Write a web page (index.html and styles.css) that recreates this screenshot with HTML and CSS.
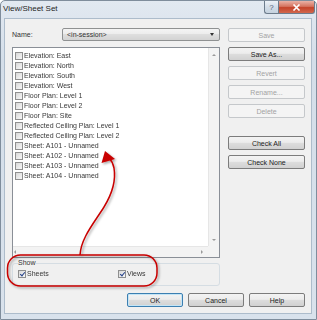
FILE: index.html
```html
<!DOCTYPE html>
<html lang="en">
<head>
    <meta charset="UTF-8">
    <title>View/Sheet Set</title>
    <link rel="stylesheet" href="styles.css">
</head>
<body>
<div class="stage">

    <!-- Dialog window -->
    <div class="window">
        <div class="titlebar">
            <span class="title">View/Sheet Set</span>
            <div class="caption-btns">
                <span class="cap-help">?</span>
                <span class="cap-close">
                    <svg width="9" height="7" viewBox="0 0 9 7"><path d="M1.5 0.5 L7.5 6.5 M7.5 0.5 L1.5 6.5" stroke="#fff" stroke-width="1.6"/></svg>
                </span>
            </div>
        </div>

        <div class="client">
            <div class="main">
                <div class="left">
                    <div class="name-row">
                        <span class="name-label">Name:</span>
                        <div class="combo">&lt;in-session&gt;<span class="combo-arrow"></span></div>
                    </div>

                    <!-- View list -->
                    <div class="listbox">
                        <div class="items">
                            <div class="item">Elevation: East</div>
                            <div class="item">Elevation: North</div>
                            <div class="item">Elevation: South</div>
                            <div class="item">Elevation: West</div>
                            <div class="item">Floor Plan: Level 1</div>
                            <div class="item">Floor Plan: Level 2</div>
                            <div class="item">Floor Plan: Site</div>
                            <div class="item">Reflected Ceiling Plan: Level 1</div>
                            <div class="item">Reflected Ceiling Plan: Level 2</div>
                            <div class="item">Sheet: A101 - Unnamed</div>
                            <div class="item">Sheet: A102 - Unnamed</div>
                            <div class="item">Sheet: A103 - Unnamed</div>
                            <div class="item">Sheet: A104 - Unnamed</div>
                        </div>
                        <div class="vscroll"><span class="arr-up"></span><span class="arr-down"></span></div>
                        <div class="hscroll"><span class="arr-left"></span><span class="arr-right"></span></div>
                        <div class="corner"></div>
                    </div>

                    <!-- Show group -->
                    <div class="show">
                        <div class="show-legend">Show</div>
                        <div class="show-row">
                            <div class="item checked opt-sheets"><span class="opt-text">Sheets</span></div>
                            <div class="item checked"><span class="opt-text">Views</span></div>
                        </div>
                    </div>
                </div>

                <!-- Side buttons -->
                <div class="right">
                    <div class="btn disabled">Save</div>
                    <div class="btn">Save As...</div>
                    <div class="btn disabled">Revert</div>
                    <div class="btn disabled">Rename...</div>
                    <div class="btn disabled">Delete</div>
                    <div class="btn gap">Check All</div>
                    <div class="btn">Check None</div>
                </div>
            </div>

            <div class="footer">
                <div class="btn default">OK</div>
                <div class="btn">Cancel</div>
                <div class="btn">Help</div>
            </div>
        </div>
    </div>

    <!-- Red annotation -->
    <svg class="annotation" width="317" height="320" viewBox="0 0 317 320">
        <defs>
            <filter id="shadow" x="-20%" y="-20%" width="140%" height="140%">
                <feDropShadow dx="1.5" dy="1.5" stdDeviation="1.2" flood-color="#000" flood-opacity="0.35"/>
            </filter>
        </defs>
        <g filter="url(#shadow)" fill="none" stroke="#c80000" stroke-width="1.5">
            <rect x="7.5" y="255" width="149.5" height="31" rx="13"/>
            <path d="M80 255 C81 238, 94 223, 104 207 C112 194, 116 180, 114 168 C113 163, 111 160, 109 158"/>
            <polygon points="105,151 101.5,163 115,159" fill="#c80000" stroke="none"/>
        </g>
    </svg>

</div>
</body>
</html>
```

FILE: styles.css
```css
/* General */
*,
*::before,
*::after {
    box-sizing: border-box;
}

body {
    margin: 0;
    background: #fff;
    font-family: "Liberation Sans", Arial, sans-serif;
    font-size: 7px;
    color: #333;
}

.stage {
    position: relative;
    width: 317px;
    height: 320px;
}

/* Window frame */
.window {
    width: 317px;
    height: 320px;
    border: 1px solid #7f8d9c;
    border-radius: 5px 5px 0 0;
    background: linear-gradient(#e2e9f1, #d4dee9 60px, #d9e2ec);
    display: flex;
    flex-direction: column;
    padding: 0 4px 5px 3px;
}

.titlebar {
    height: 17px;
    display: flex;
    justify-content: space-between;
    align-items: flex-start;
}

.title {
    font-size: 8px;
    line-height: 16px;
    color: #1e1e1e;
    margin-left: -1px;
}

.caption-btns {
    display: flex;
    margin-right: -3px;
}

.cap-help,
.cap-close {
    height: 13px;
    border: 1px solid #6d7c8c;
    border-top: none;
    display: flex;
    align-items: center;
    justify-content: center;
}

.cap-help {
    width: 14px;
    border-right: none;
    border-radius: 0 0 0 3px;
    background: linear-gradient(#edf2f7, #d3dde8 50%, #c5d2df);
    color: #56657a;
    font-size: 8px;
}

.cap-close {
    width: 37px;
    border-radius: 0 0 3px 0;
    background: linear-gradient(#eab2a6, #d57460 45%, #c4432a 55%, #d2684e);
}

/* Client area */
.client {
    flex: 1;
    background: #f0f0f0;
    border: 1px solid #adbccb;
    padding: 9px 6px 6px 7px;
    display: flex;
    flex-direction: column;
}

.main {
    display: flex;
    gap: 8px;
}

.left {
    width: 208px;
    display: flex;
    flex-direction: column;
}

.name-row {
    display: flex;
    align-items: center;
    height: 13px;
}

.name-label {
    width: 50px;
}

.combo {
    position: relative;
    width: 158px;
    height: 13px;
    border: 1px solid #8f9192;
    border-radius: 2px;
    background: linear-gradient(#f4f4f4, #ececec 45%, #dedede 50%, #d3d3d3);
    padding-left: 4px;
    line-height: 11px;
}

.combo-arrow {
    position: absolute;
    right: 5px;
    top: 4px;
    border-left: 2.5px solid transparent;
    border-right: 2.5px solid transparent;
    border-top: 3px solid #333;
}

/* List box */
.listbox {
    margin-top: 6px;
    height: 211px;
    border: 1px solid #8a8f97;
    background: #fff;
    display: grid;
    grid-template-columns: 1fr 11px;
    grid-template-rows: 1fr 11px;
}

/* grayscale keeps the tiny text free of colour fringes */
.items {
    padding: 3px 0 0 2px;
    filter: grayscale(1);
}

.opt-text {
    display: inline-block;
    filter: grayscale(1);
}

/* checkbox row: box drawn by ::before */
.item {
    position: relative;
    height: 10px;
    line-height: 10px;
    padding-left: 9px;
    white-space: nowrap;
    color: #383838;
}

.item::before {
    content: "";
    position: absolute;
    left: 0;
    top: 1px;
    width: 8px;
    height: 8px;
    border: 1px solid #8e8f8f;
    background: linear-gradient(135deg, #d8d8d8, #f7f7f7);
}

.item.checked::after {
    content: "";
    position: absolute;
    left: 2.5px;
    top: 1.5px;
    width: 3px;
    height: 5px;
    border-right: 1.3px solid #23408a;
    border-bottom: 1.3px solid #23408a;
    transform: rotate(40deg);
}

.vscroll,
.hscroll,
.corner {
    background: #f3f3f3;
    position: relative;
}

.vscroll {
    border-left: 1px solid #e6e6e6;
}

.hscroll {
    border-top: 1px solid #e6e6e6;
}

.arr-up,
.arr-down,
.arr-left,
.arr-right {
    position: absolute;
    width: 0;
    height: 0;
}

.arr-up {
    top: 6px;
    left: 3px;
    border-left: 2.5px solid transparent;
    border-right: 2.5px solid transparent;
    border-bottom: 2.5px solid #9a9a9a;
}

.arr-down {
    bottom: 5px;
    left: 3px;
    border-left: 2.5px solid transparent;
    border-right: 2.5px solid transparent;
    border-top: 2.5px solid #9a9a9a;
}

.arr-left {
    left: 1px;
    top: 3px;
    border-top: 2.5px solid transparent;
    border-bottom: 2.5px solid transparent;
    border-right: 2.5px solid #9a9a9a;
}

.arr-right {
    right: 5px;
    top: 3px;
    border-top: 2.5px solid transparent;
    border-bottom: 2.5px solid transparent;
    border-left: 2.5px solid #9a9a9a;
}

/* Show group */
.show {
    margin-top: 5px;
    height: 23px;
    padding: 0 5px;
    border: 1px solid #d5dde3;
    border-radius: 3px;
}

.show-legend {
    width: fit-content;
    margin-top: -5px;
    line-height: 8px;
    background: #f0f0f0;
}

.show-row {
    display: flex;
    margin-top: 2px;
}

.opt-sheets {
    width: 100px;
}

/* Buttons */
.right {
    width: 77px;
    display: flex;
    flex-direction: column;
    gap: 5px;
}

.btn {
    height: 14px;
    border: 1px solid #7c7c7c;
    border-radius: 2px;
    background: linear-gradient(#f3f3f3, #ececec 45%, #dddddd 50%, #d1d1d1);
    display: flex;
    align-items: center;
    justify-content: center;
    color: #222;
}

.btn.disabled {
    border-color: #c5c8cb;
    background: #f4f4f4;
    color: #a3a3a3;
}

.btn.gap {
    margin-top: 13px;
}

.footer {
    margin-top: auto;
    display: flex;
    justify-content: flex-end;
    gap: 5px;
}

.footer .btn {
    width: 56px;
}

.btn.default {
    border-color: #3c7fb1;
    box-shadow: inset 0 0 0 1px #c4e5f6;
}

/* Annotation overlay */
.annotation {
    position: absolute;
    top: 0;
    left: 0;
    pointer-events: none;
}
```
